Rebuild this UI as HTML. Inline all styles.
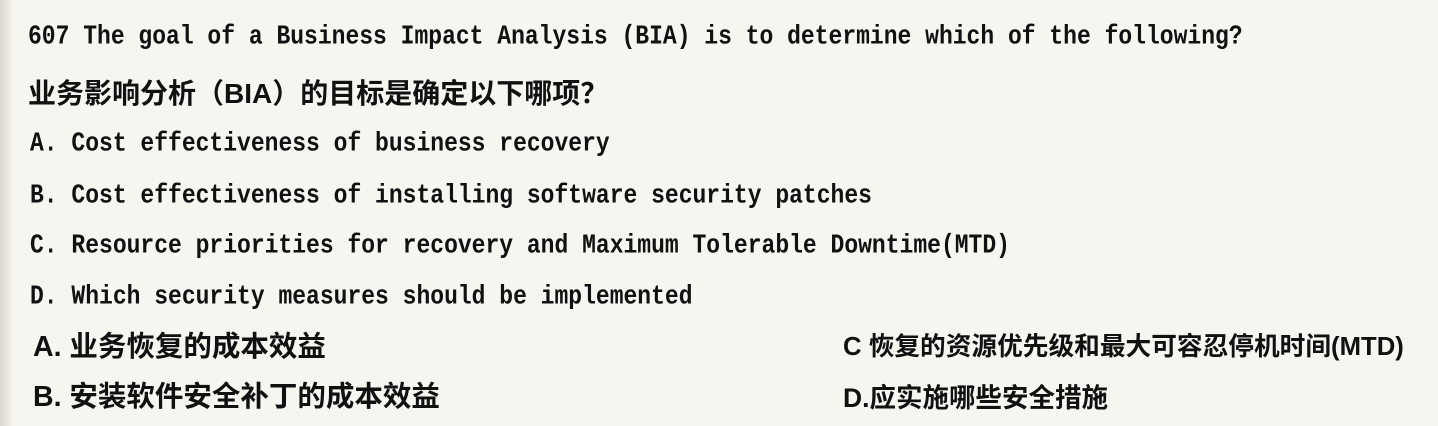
<!DOCTYPE html>
<html><head><meta charset="utf-8"><style>
html,body{margin:0;padding:0}
body{width:1438px;height:426px;background:#f7f5ef;position:relative;overflow:hidden;color:#111}
.edge{position:absolute;left:0;top:0;width:14px;height:426px;background:linear-gradient(90deg,#d9d6cf,#efece5 70%,#f7f5ef)}
.l{position:absolute;white-space:pre;line-height:1}
.en{font-family:"Liberation Mono","Noto Sans CJK SC",monospace;font-size:23px;font-weight:bold;transform:scaleY(1.15);transform-origin:left top}
.zh{font-family:"Liberation Sans","Noto Sans CJK SC",sans-serif;font-size:28.5px;font-weight:bold}
</style></head><body>
<div class="edge"></div>
<div class="l en" style="left:28px;top:24px">607 The goal of a Business Impact Analysis (BIA) is to determine which of the following?</div>
<div class="l zh" style="left:28px;top:80px;font-size:28px">业务影响分析（BIA）的目标是确定以下哪项？</div>
<div class="l en" style="left:30px;top:131px">A. Cost effectiveness of business recovery</div>
<div class="l en" style="left:30px;top:183px">B. Cost effectiveness of installing software security patches</div>
<div class="l en" style="left:30px;top:233px">C. Resource priorities for recovery and Maximum Tolerable Downtime(MTD)</div>
<div class="l en" style="left:30px;top:284px">D. Which security measures should be implemented</div>
<div class="l zh" style="left:33px;top:333px">A. 业务恢复的成本效益</div>
<div class="l zh" style="left:843px;top:335px;font-size:25.7px">C 恢复的资源优先级和最大可容忍停机时间(MTD)</div>
<div class="l zh" style="left:33px;top:383px">B. 安装软件安全补丁的成本效益</div>
<div class="l zh" style="left:843px;top:385px;font-size:26.5px">D.应实施哪些安全措施</div>
</body></html>
